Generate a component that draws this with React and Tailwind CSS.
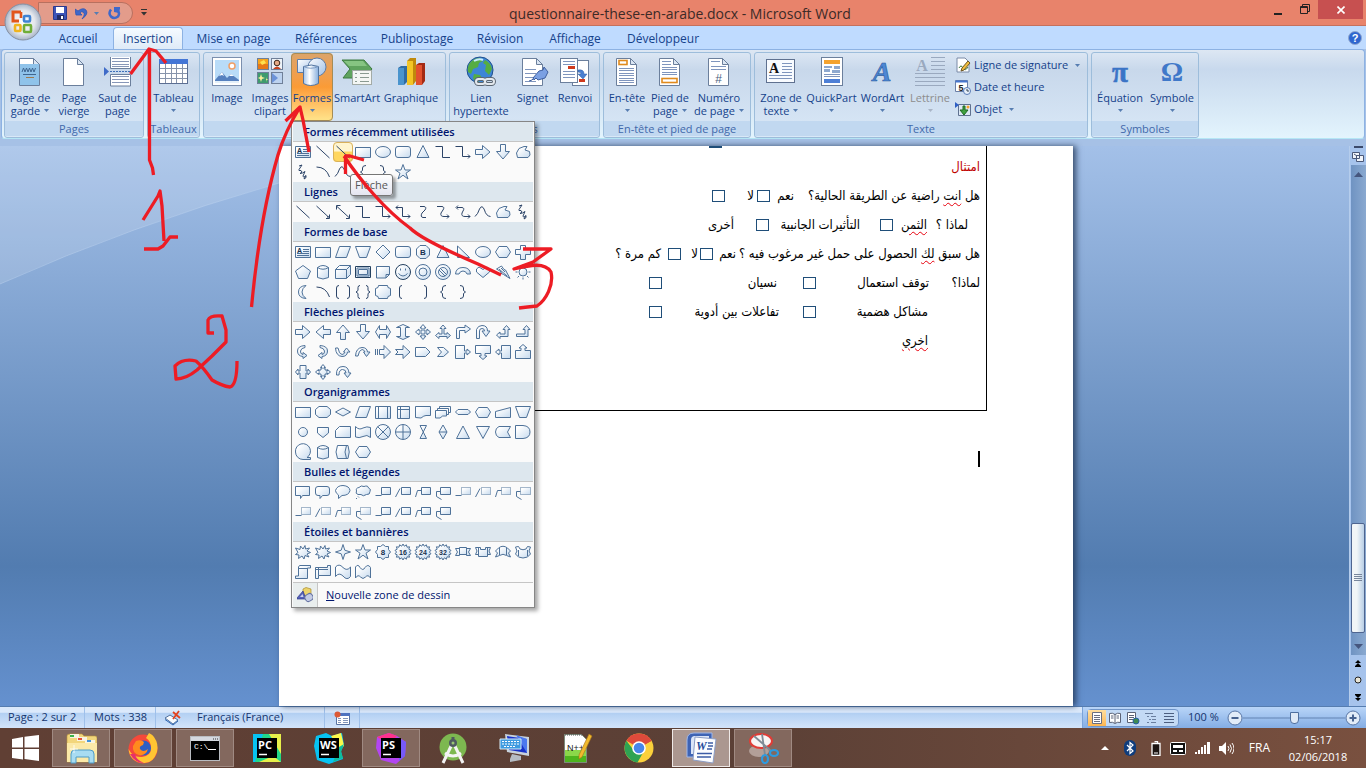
import React from 'react';

const UI = "font-['Open_Sans','Noto_Sans',sans-serif]";

/* Shape gallery: [filled outline, plain line, label] in a 20x20 cell */
const ARROW_R = 'M2.5 7.5H9.5V3.5L17 10L9.5 16.5V12.5H2.5Z';
const CYL = 'M4.5 5.5V15.5Q10 18.5 15.5 15.5V5.5Q10 1.500 4.5 5.5Z';
const STAR = 'M10 2.5L12 8H17.5L13 11.2L15 17L10 13.2L5 17L7 11.2L2.5 8H8Z';
const SEAL = 'M10 2L11.3 4.2L13.4 2.8L14 5.2L16.6 4.8L15.8 7.2L18 8.4L16.4 10L18 11.8L15.8 12.8L16.6 15.2L14 14.8L13.4 17.2L11.3 15.8L10 18L8.7 15.8L6.6 17.2L6 14.8L3.4 15.2L4.2 12.8L2 11.8L3.6 10L2 8.4L4.2 7.2L3.4 4.8L6 5.2L6.6 2.8L8.7 4.2Z';
const CIRCLE = 'M2.5 10A7.5 7.5 0 1 1 17.5 10A7.5 7.5 0 1 1 2.5 10Z';
const S = {
  textbox: ['M2.5 4.5H17.5V15.5H2.5Z', 'M10 7.5H16M10 9.5H16M4 11.5H16M4 13.5H16', 'A'],
  line: ['', 'M3.5 4L16.5 16'],
  arrow: ['', 'M3.5 4L16 15.5M16.5 12.5V16.5H13M15 14V15H14'],
  dbl: ['', 'M4 4.5L16 15.5M16.5 12.5V16.5H13M3.5 7.5V3.5H7.5'],
  rect: ['M2.5 5.5H17.5V15.5H2.5Z', ''],
  ellipse: ['M2.5 10A7.5 5.5 0 0 1 17.5 10A7.5 5.5 0 0 1 2.5 10Z', ''],
  round: ['M5 4.5H15Q17.5 4.5 17.5 7V13Q17.5 15.5 15 15.5H5Q2.5 15.5 2.5 13V7Q2.5 4.5 5 4.5Z', ''],
  tri: ['M10 3.5L16 15.5H4Z', ''],
  elbow: ['', 'M2.5 4.5H9.5V15.5H17'],
  elbowA: ['', 'M2.5 4.5H9.5V14.5H17M15 12.5L17 14.5L15 16.5'],
  elbowD: ['', 'M3 5.5H9.5V14.5H17M15 12.5L17 14.5L15 16.5M5 3.5L3 5.5L5 7.5'],
  right: [ARROW_R, ''],
  left: ['M17.5 7.5H10.5V3.5L3 10L10.5 16.5V12.5H17.5Z', ''],
  up: ['M7.5 17.5V10.5H3.5L10 3L16.5 10.5H12.5V17.5Z', ''],
  down: ['M7.5 2.5V9.5H3.5L10 17L16.5 9.5H12.5V2.5Z', ''],
  free: ['M4.5 15.5L3.5 11L6 6.5L11 4.5H14L12 8L16.5 9.5L17 13L15 15.5Z', ''],
  scrib: ['', 'M6 4L9 3L6 7.5Q5 9 8 8.5L9 10L7 11.5L9.5 11L12 9.5L10 14Q10 16 13 13.5Q14 16 11 17L12.5 14'],
  arc: ['', 'M3.5 5Q13 5 16.5 15'],
  curve: ['', 'M2 14.5Q5 12 6.5 7Q9 2 11.5 8Q13 14 17.5 14.5'],
  lbrace: ['', 'M13 3.5Q9.5 3.5 9.5 6V8.5L7.5 10L9.5 11.5V14Q9.5 16.5 13 16.5'],
  rbrace: ['', 'M7 3.5Q10.5 3.5 10.5 6V8.5L12.5 10L10.5 11.5V14Q10.5 16.5 7 16.5'],
  star: [STAR, ''],
  scurve: ['', 'M7 4.5H11Q14 5 12 8L9 11Q7 15 10 15.5H13'],
  scurveA: ['', 'M4 4.5H9Q12 5 10 8L8 11Q7 14.5 11 14.5H16M14 12.5L16 14.5L14 16.5'],
  scurveD: ['', 'M4 5.5H9Q12 6 10 9L9 11Q8 14.5 12 14.5H17M15 12.5L17 14.5L15 16.5M5 3.5L3 5.5L5 7.5'],
  para: ['M6.5 4.5H17.5L13.5 15.5H2.5Z', ''],
  trap: ['M2.5 4.5H17.5L13.5 15.5H6.5Z', ''],
  diam: ['M10 3L17 10L10 17L3 10Z', ''],
  octo: ['M7 3.5H13L16.5 7V13L13 16.5H7L3.5 13V7Z', '', 'B'],
  rtri: ['M4.5 4L16.5 15.5H4.5Z', ''],
  hex: ['M6 4.5H14L17.5 10L14 15.5H6L2.5 10Z', ''],
  cross: ['M7.5 3.5H12.5V7.5H17.5V12.5H12.5V17.5H7.5V12.5H2.5V7.5H7.5Z', ''],
  penta: ['M10 3.5L17.5 9L14.5 16.5H5.5L2.5 9Z', ''],
  can: [CYL, 'M4.5 5.5Q10 9 15.5 5.5'],
  cube: ['M2.5 7.5L6.5 3.5H17.5V12.5L13.5 16.5H2.5Z', 'M2.5 7.5H13.5V16.5M13.5 7.5L17.5 3.5'],
  bevel: ['M2.5 4.5H17.5V15.5H2.5Z', 'M4 6H16V14H4ZM5.5 7.5H14.5V12.5H5.5Z'],
  fold: ['M3.5 4.5H16.5V12.5L13 16H3.5Z', 'M13 16V12.5H16.5'],
  smile: [CIRCLE, 'M7.5 6.5V8.5M12.5 6.5V8.5M5.5 11.5Q10 16.5 14.5 11.5'],
  donut: [CIRCLE, 'M6 10A4 4 0 1 1 14 10A4 4 0 1 1 6 10Z'],
  no: [CIRCLE, 'M5.5 10A4.5 4.5 0 1 1 14.5 10A4.5 4.5 0 1 1 5.5 10ZM7 6L14 13M6 8L12 14'],
  blockarc: ['M2.5 12Q3 5.5 10 5.5Q17 5.5 17.5 12H14Q13 9 10 9Q7 9 6 12Z', ''],
  heart: ['M10 15.5L3.5 10V7L6 5L10 7.5L14 5L16.5 7V10Z', ''],
  bolt: ['M3.5 7L8.5 4L11 7.5L12.5 8L17 16.5L10.5 12.5L7.5 11L8.5 10Z', 'M6 7L14 14M8 6L12 10'],
  sun: ['M6 10A4 4 0 1 1 14 10A4 4 0 1 1 6 10Z', 'M10 2.5V4.5M10 15.5V17.5M2.5 10H4.5M15.5 10H17.5M4.5 4.5L6 6M14 14L15.5 15.5M15.5 4.5L14 6M6 14L4.5 15.5'],
  moon: ['M13 3.5Q5.5 4 5.5 10Q5.5 16 13 16.5Q9 13.5 9 10Q9 6.5 13 3.5Z', ''],
  brackets: ['', 'M6 3.5Q3.5 3.5 3.5 6V14Q3.5 16.5 6 16.5M14 3.5Q16.5 3.5 16.5 6V14Q16.5 16.5 14 16.5'],
  braces: ['', 'M7 3.5Q5 3.5 5 5.5V8.5L3 10L5 11.5V14.5Q5 16.5 7 16.5M13 3.5Q15 3.5 15 5.5V8.5L17 10L15 11.5V14.5Q15 16.5 13 16.5'],
  plaque: ['M5.500 3.5H14.5L15 5.5L17.5 6.5V13.5L15 14.5L14.5 16.5H5.5L5 14.5L2.5 13.5V6.5L5 5.5Z', ''],
  lbr: ['', 'M9 3.5Q6.5 3.5 6.5 6V14Q6.5 16.5 9 16.5'],
  rbr: ['', 'M11 3.5Q13.5 3.5 13.5 6V14Q13.5 16.5 11 16.5'],
  leftright: ['M2.5 10L6.5 3.5V7.5H13.5V3.5L17.5 10L13.5 16.5V12.5H6.5V16.5Z', ''],
  updown: ['M10 2.5L16.5 5.5H12.5V14.5H16.5L10 17.5L3.5 14.5H7.5V5.5H3.5Z', ''],
  quad: ['M10 2.5L13 6H11V9H14V7L17.5 10L14 13V11H11V14H13L10 17.5L7 14H9V11H6V13L2.5 10L6 7V9H9V6H7Z', ''],
  tri3: ['M10 3L13 6.5H11V12H14V10.5L17.5 13.5L14 16.5V14.5H6V16.5L2.5 13.5L6 10.5V12H9V6.5H7Z', ''],
  bend: ['M3.5 16.5V7.5Q3.5 5.5 6 5.5H12V3L17.5 7L12 11V8.5H6.5V16.5Z', ''],
  uturn: ['M3.5 16.5V7.5Q5 3.5 9 3.5Q14.5 3.5 14.5 9H17L13 14.5L9 9H11.5Q11.5 6.5 9 6.5Q6.5 6.5 6.5 9V16.5Z', ''],
  leftup: ['M13.5 3.5L17 7.5H15V14.5H7V16.5L3.5 13L7 10V12H12V7.5H10Z', ''],
  bendup: ['M13.5 3.5L17 7.5H15V14.5H3.5V12H12V7.5H10Z', ''],
  cright: ['M12 3.5Q4.5 4 4.5 9Q4.5 14 10 14.5V16.5L14 13.5L10 10.5V12.5Q7 12 7.5 9Q8 6 12 5.5Z', ''],
  cleft: ['M7 3.5Q14.5 4 14.5 9Q14.5 14 9 14.5V16.5L5 13.5L9 10.5V12.5Q12 12 11.5 9Q11 6 7 5.5Z', ''],
  cup: ['M2.5 6Q3 14 9 14.5Q14 14.5 14.5 10H17L13.5 6L10.5 10H12Q11 12.5 9 12.5Q6 12 5 6Z', ''],
  cdown: ['M2.5 14Q3 6 9 5.5Q14 5.5 14.5 10H17L13.5 14.5L10.5 10H12Q11 7.5 9 7.5Q6 8 5 14Z', ''],
  stripe: ['M6.5 7.5H11V3.5L17.5 10L11 16.5V12.5H6.5Z', 'M2.5 7V13M4.5 7V13'],
  notch: ['M2.5 7.5H10V3.5L17 10L10 16.5V12.5H2.5L5 10Z', ''],
  pent: ['M2.5 5.5H12.5L17 10L12.5 14.5H2.5Z', ''],
  chev: ['M4.5 5.5H10.5L15.5 10L10.5 14.5H4.5L8.5 10Z', ''],
  callR: ['M2.5 3.5H11.5V9H14V7L17.5 10L14 13V11H11.5V16.5H2.5Z', ''],
  callD: ['M2.5 3.5H17.5V11.5H12V14H14L10 17.5L6 14H8V11.5H2.5Z', ''],
  callL: ['M17.5 3.5H8.5V9H6V7L2.5 10L6 13V11H8.5V16.5H17.5Z', ''],
  callU: ['M2.5 16.5H17.5V8.5H12V6H14L10 2.5L6 6H8V8.5H2.5Z', ''],
  callLR: ['M7 3.5H13V9H15V7L17.5 10L15 13V11H13V16.5H7V11H5V13L2.5 10L5 7V9H7Z', ''],
  callQ: ['M10 2.5L12.5 5.5H11V7H13V9H14.5V7.5L17.5 10L14.5 12.5V11H13V13H11V14.5H12.5L10 17.5L7.5 14.5H9V13H7V11H5.5V12.5L2.5 10L5.5 7.5V9H7V7H9V5.5H7.5Z', ''],
  circ: ['M3.5 13Q3 4.5 10 4.5Q15.5 4.5 16 11H18L14.5 15.5L11 11H13Q13 7.5 9.5 7.5Q6 7.5 6 13Z', ''],
  altp: ['M6 4.5H14L17.5 7.5V12.5L14 15.5H6L2.5 12.5V7.5Z', ''],
  flat: ['M2.5 10L10 6L17.5 10L10 14Z', ''],
  predef: ['M2.5 4.5H17.5V16.5H2.5Z', 'M5.5 4.5V16.5M14.5 4.5V16.5'],
  intern: ['M4.5 4.5H16.5V16.5H4.5Z', 'M7.5 4.5V16.5M4.5 7.5H16.5'],
  doc: ['M2.5 4.5H17.5V13.5H13Q11 13.5 8 16L2.5 15.5Z', ''],
  docs: ['M2.5 8.5H13.5V14Q9 13 7 16H2.5Z', 'M4.5 8V6.5H15.5V12.5H14M6.5 6V4.5H17.5V10.5H16'],
  term: ['M5 7.5H15L17.5 10L15 12.5H5L2.5 10Z', ''],
  prep: ['M5.5 5.5H14.5L17.5 10L14.5 15.5H5.5L2.5 10Z', ''],
  manual: ['M2.5 9.5L17.5 5.5V15.5H2.5Z', ''],
  conn: ['M5.5 10A4.5 4.5 0 1 1 14.5 10A4.5 4.5 0 1 1 5.5 10Z', ''],
  off: ['M4.5 5.5H15.5V11L10 15.5L4.5 11Z', ''],
  card: ['M6.5 4.5H17.5V15.5H2.5V8.5Z', ''],
  tape: ['M2.5 4.5Q6 8.5 10 6Q14 4 17.5 5.5V15.5Q14 12 10 14.5Q6 16.5 2.5 15Z', ''],
  sumj: [CIRCLE, 'M4.5 4.5L15.5 15.5M15.5 4.5L4.5 15.5'],
  orj: [CIRCLE, 'M10 2.5V17.5M2.5 10H17.5'],
  coll: ['M7 3.5H13.5L7 16.5H13.5Z', ''],
  sort: ['M10 3L14 10L10 17L6 10Z', 'M6 10H14'],
  ext: ['M10 4L16.5 16.5H3.5Z', ''],
  merge: ['M3.5 4.5H16.5L10 16.5Z', ''],
  stored: ['M6 4.5H17.5L14.5 10L17.5 15.5H6Q2.5 14 2.5 10Q2.5 6 6 4.5Z', ''],
  delay: ['M2.5 3.5H10Q17 4 17 10Q17 16 10 16.5H2.5Z', ''],
  seq: ['M2.5 10A7.5 7.5 0 1 1 14 15.5H17.5V17.5H10A7.5 7.5 0 0 1 2.5 10Z', ''],
  direct: ['M4.5 3.5H15Q17.5 10 15 16.5H4.5Q1.5 10 4.5 3.5Z', 'M13.5 3.5Q10.5 10 13.5 16.5'],
  bub1: ['M2.5 4.5H16.5V13.5H9.5L7.5 16.5V13.5H2.5Z', ''],
  bub2: ['M5 4.5H14Q16.5 4.5 16.5 7V11Q16.5 13.5 14 13.5H9.5L7 16.5V13.5H5Q2.5 13.5 2.5 11V7Q2.5 4.5 5 4.5Z', ''],
  bub3: ['M5.5 16.5L5.5 13Q2.5 11 2.5 8.5Q4 3.5 10 3.5Q16.5 4 17 8.5Q16 13.5 9 13.5Z', ''],
  cloud: ['M5 12.5Q2 11.5 3.5 9Q2.5 6 6 5.5Q8 3 11 4.5Q15 3 15.5 6Q18.5 7 17 9.5Q17 13 13.5 12.5Q10 15 8 12.5Z', 'M5 14.5L6 15.5M3 16.5H4'],
  fx1: ['M8.5 5.5H17.5V12.5H8.5Z', 'M2.5 13.5H8.5'],
  fx2: ['M8.5 5.5H17.5V12.5H8.5Z', 'M2.5 15L7 6.5'],
  fx3: ['M8.5 5.5H17.5V12.5H8.5Z', 'M2.5 15L4.5 8.5H8.5'],
  fx4: ['M7.5 5.5H17.5V12.5H7.5Z', 'M7.5 9.5H3.5V14.5L8.5 17.5'],
  star5a: ['M10 7L12 3.5L12.5 7L16.5 6L14 9L17.5 10.5L14 12L16 15L12 13.5L11 17L9 14L5.5 16.5L6 13L2.5 12.5L5 10.5L2.5 6L7 7.5L7.5 4Z', ''],
  star4: ['M10 2.5L11.8 8.2L17.5 10L11.8 11.8L10 17.5L8.2 11.8L2.5 10L8.2 8.2Z', ''],
  seal8: ['M10 2.5L12.5 4.5H15.5V7.5L17.5 10L15.5 12.5V15.5H12.5L10 17.5L7.5 15.5H4.5V12.5L2.5 10L4.5 7.5V4.5H7.5Z', '', '8'],
  seal16: [SEAL, '', '16'],
  seal24: [SEAL, '', '24'],
  seal32: [SEAL, '', '32'],
  rib1: ['M2.5 6.5H6.5V5.5H13.5V6.5H17.5L15.5 10L17.5 13.5H13.5V12.5H6.5V13.5H2.5L4.5 10Z', 'M6.5 6V13M13.5 6V13'],
  rib2: ['M2.5 5.5H7.5V7.5H12.5V5.5H17.5L16 9L17.5 12.5H14.5V14.5H5.5V12.5H2.5L4 9Z', 'M5.5 6V13M14.5 6V13'],
  rib3: ['M2.5 15L4.5 11L2.5 9L5.5 6Q10 2.5 14.5 6L17.5 9L15.5 11L17.5 15L13.5 13.5Q10 11 6.5 13.5Z', 'M6.5 6V13M13.5 6V13'],
  rib4: ['M2.5 5L5.5 4.5L7 7Q10 8.5 13 7L14.5 4.5L17.5 5L16 9L17.5 12L14.5 15Q10 17 5.5 15L2.5 12L4 9Z', 'M5.5 8V14M14.5 8V14'],
  scrollV: ['M6.5 3.5H17.5V6H14.5V16.5H2.5V14H5.5V5Z', 'M6 6.5H14.5'],
  scrollH: ['M2.5 5.5L14.5 5.5V3.5H17.5V13.5H5.5V16.5H2.5Z', 'M5.5 6V13.5M2.5 7.5H15'],
  wave: ['M2.5 5Q6 1 10 5.5Q14 9.500 17.5 5V14.5Q14 19 10 14Q6 10 2.5 14.5Z', ''],
  dwave: ['M2.5 5Q5 1.500 7 5.5Q10 9.500 12 5.5Q15 1.500 17.5 5.5V16Q15 12 12.5 15Q10 18 7.5 15Q5 12 2.5 16Z', ''],
};

const SECTIONS = [
  ['Formes récemment utilisées', 'textbox line line rect ellipse round tri elbow elbowA right down free scrib arc curve lbrace rbrace star'],
  ['Lignes', 'line arrow dbl elbow elbowA elbowD scurve scurveA scurveD curve free scrib'],
  ['Formes de base', 'textbox rect para trap diam round octo tri rtri ellipse hex cross penta can cube bevel fold smile donut no blockarc heart bolt sun moon arc brackets braces plaque lbr rbr lbrace rbrace'],
  ['Flèches pleines', 'right left up down leftright updown quad tri3 bend uturn leftup bendup cright cleft cup cdown stripe notch pent chev callR callD callL callU callLR callQ circ'],
  ['Organigrammes', 'rect altp flat para predef intern doc docs term prep manual trap conn off card tape sumj orj coll sort ext merge stored delay seq can direct hex'],
  ['Bulles et légendes', 'bub1 bub2 bub3 cloud fx1 fx2 fx3 fx4 fx1.d fx2.d fx3.d fx4.d fx1.d fx2.d fx3.d fx4.d fx1 fx2 fx3 fx4'],
  ['Étoiles et bannières', 'star5a star5a star4 star seal8 seal16 seal24 seal32 rib1 rib2 rib3 rib4 scrollV scrollH wave dwave'],
];

function Shape({ name }) {
  const [key, dashed] = name.split('.');
  const [fill, line, label] = S[key];
  const lineColor = fill ? '#4f7299' : '#2c4468';
  return (
    <svg viewBox="0 0 20 20" className="size-5" aria-hidden="true">
      {fill && <path d={fill} fill="url(#shapeFill)" stroke={key === 'bevel' || key === 'smile' ? '#23405f' : '#4f7299'} strokeDasharray={dashed ? '1 1' : undefined} />}
      {line && <path d={line} fill="none" stroke={lineColor} />}
      {label && (
        <text x={label === 'A' ? 6.5 : 10} y={label === 'A' ? 10.5 : 12.5} textAnchor="middle" fontSize={label === 'B' || label === '8' ? 8 : 7} fontWeight="700" fontFamily="Liberation Sans, sans-serif" fill="#16304f">{label}</text>
      )}
    </svg>
  );
}

function ShapesMenu() {
  return (
    <div className="absolute left-[291px] top-[121px] w-[244px] border border-[#868686] bg-[#fafafa] px-px shadow-[3px_3px_4px_rgba(0,0,0,0.35)]">
      {SECTIONS.map(([title, list], si) => (
        <section key={title}>
          <h2 className="h-5 border-b border-[#c5c5c5] bg-[#dde7ee] pl-[11px] text-[11px] font-semibold leading-[19px] text-[#00156e]">{title}</h2>
          <div className="grid grid-cols-12">
            {list.split(' ').map((n, i) => (
              <button key={i} aria-label={n} className={si === 0 && i === 2 ? 'h-5 rounded-sm bg-linear-to-b from-[#fff5cf] from-45% to-[#ffd65e] to-50% outline-1 -outline-offset-1 outline-[#d8b05c]' : 'h-5'}>
                <Shape name={n} />
              </button>
            ))}
          </div>
        </section>
      ))}
      <button className="flex h-[25px] w-full items-center border-t border-[#c5c5c5] text-[11px] text-[#00156e]">
        <span className="flex h-full w-[25px] items-center justify-center border-r border-[#c5c5c5] bg-[#e9eeee]">
          <svg viewBox="0 0 16 16" className="size-4"><path d="M6 2l3-1.5L14 2v6l-4 2-4-2z" fill="#ecd36a" stroke="#a98c2c" strokeWidth=".7" /><path d="M0 11L6 4l3 8H0z" fill="#5561b8" stroke="#2f3a8a" strokeWidth=".7" /><path d="M3 10l2.500-3 1 3z" fill="#cdd2ee" /><rect x="8" y="7" width="8" height="7" rx="3" fill="#c3cbe4" stroke="#6572a3" transform="rotate(-35 12 10.500)" /></svg>
        </span>
        <span className="pl-2"><span className="underline">N</span>ouvelle zone de dessin</span>
      </button>
    </div>
  );
}

/* ---------- ribbon icons ---------- */
const Page = ({ children, x = 5, y = 2, w = 21, h = 28 }) => (
  <>
    <path d={`M${x + 0.5} ${y + 0.5}h${w - 7}l6 6v${h - 7}h-${w - 1}z`} fill="#fff" stroke="#6b7f9c" />
    <path d={`M${x + w - 6.5} ${y + 0.5}v6h6z`} fill="#dbe6f3" stroke="#6b7f9c" />
    {children}
  </>
);
const Lines = ({ x1, x2, ys, c = '#7f95bd' }) => <path d={ys.map((y) => `M${x1} ${y + 0.5}H${x2}`).join('')} stroke={c} fill="none" />;

const ICONS = {
  garde: <Page><path d="M6 8h19v21H6z" fill="#8fc3ea" /><path d="M8 16l1.500-4 1.500 4 1.500-4 1.500 4 1.500-4 1.500 4 1.500-4 1.500 4 1.500-4" stroke="#3f6791" fill="none" /><Lines x1={9} x2={22} ys={[18]} c="#3f6791" /><Lines x1={12} x2={20} ys={[21]} c="#a07a4e" /></Page>,
  vierge: <Page />,
  saut: <><path d="M8.500 1v11.500h20V1" fill="#fff" stroke="#6b7f9c" /><path d="M8.500 30V18.500h20V30z" fill="#fff" stroke="#6b7f9c" /><Lines x1={10} x2={27} ys={[2, 5, 8, 10, 20, 23, 26]} c="#8797b8" /><path d="M2 11l5 4.500-5 4.500z" fill="#3f6bc8" /><path d="M8 15.500h22" stroke="#3c6eb9" strokeDasharray="2 1" /></>,
  tableau: <><rect x="1.500" y="3.500" width="28" height="24" fill="#fff" stroke="#5c6f93" /><path d="M1 3h29v5H1z" fill="#4476d6" /><path d="M2 12.500h27M2 17.500h27M2 22.500h27M7.500 8v19M13.500 8v19M18.500 8v19M24.500 8v19" stroke="#8794ab" /></>,
  image: <><rect x="1.500" y="1.500" width="29" height="28" fill="#fff" stroke="#7b8fae" /><rect x="4" y="4" width="24" height="23" fill="#b9dcf8" /><circle cx="21" cy="10" r="3" fill="#fff" stroke="#f0a068" strokeWidth="1.500" /><path d="M4 24l7-8 5 6 4-4 8 6v1H4z" fill="#5681bf" /><path d="M4 25h24v2H4z" fill="#e4f0fa" /><path d="M11 16l-3 4 3-1 2 1zM20 18l-2 2h5z" fill="#fff" /></>,
  clipart: <><rect x="3.500" y="2.500" width="11" height="11" fill="#f7a41d" stroke="#6f7f98" /><path d="M4 8h10v5H4z" fill="#e77817" /><path d="M6 6l4-2 2 3-4 2z" fill="#ffe14f" /><rect x="17.500" y="2.500" width="11" height="11" fill="#eef3f8" stroke="#6f7f98" /><circle cx="23" cy="7" r="2.800" fill="#e4a985" stroke="#3b2518" /><path d="M19 13q4-5 8 0z" fill="#c6421f" /><rect x="3.500" y="16.500" width="11" height="11" fill="#3f9b6e" stroke="#6f7f98" /><path d="M7 18l1 3 3 1-3 1-1 3-1-3-2-1 2-1zM12 21l.500 2 2 .500-2 .500-.500 2z" fill="#f7ee9a" /><rect x="17.500" y="16.500" width="11" height="11" fill="#bcd2ef" stroke="#6f7f98" /><path d="M18 17l6 5-6 5z" fill="#6d93d8" /></>,
  formes: <><path d="M1.500 3.500h17v13h-17z" fill="url(#blue3)" stroke="#5e7da8" /><circle cx="21" cy="11" r="9" fill="url(#blue3)" stroke="#5e7da8" /><path d="M7.500 10.500v17q7 4 15 0v-17q-7-3-15 0z" fill="url(#cylFill)" stroke="#53749f" /><path d="M7.500 10.500q7 3.500 15 0" fill="none" stroke="#7d9cc5" /></>,
  smartart: <><path d="M1 4h22l8 9-8 9H2l7-9z" fill="#5fa35e" stroke="#3d7a41" /><path d="M3 5h19l4 5H8z" fill="#86c482" /><rect x="11.500" y="14.500" width="19" height="14" fill="#f4f6f4" stroke="#a3aba6" /><Lines x1={19} x2={28} ys={[17, 21, 25]} c="#8a9a92" /><path d="M14 17.500h2M14 21.500h2M14 25.500h2" stroke="#8a9a92" /></>,
  graphique: <><path d="M3 12l3-2h6v16l-3 3H3z" fill="#2f6ba3" /><path d="M3 12h6v17H3z" fill="#4a94cd" /><path d="M12 5l3-3h6v23l-3 4h-6z" fill="#c08a0c" /><path d="M12 5h6v24h-6z" fill="#f3c526" /><path d="M21 9l3-2h6v18l-3 4h-6z" fill="#a32a14" /><path d="M21 9h6v20h-6z" fill="#e2512f" /></>,
  lien: <><circle cx="15" cy="14" r="13" fill="#3d86d6" stroke="#20508c" /><path d="M4 8q4-6 11-6l3 3-4 2-1 4-5 2-2 5-3-2q-1-4 1-8zM20 4q6 3 7 9l-3 6-4-4 1-6-3-2zM9 18l6 1 2 3-4 4q-4-1-5-4z" fill="#55ad43" /><path d="M9 5q5-3 9-1" stroke="#c9ecff" fill="none" strokeWidth="2" /><g fill="none" strokeWidth="4" stroke="#5c6773"><rect x="11" y="23" width="9" height="5" rx="2.500" /><rect x="20" y="23" width="9" height="5" rx="2.500" /></g><g fill="none" strokeWidth="2" stroke="#e3e8ed"><rect x="11" y="23" width="9" height="5" rx="2.500" /><rect x="20" y="23" width="9" height="5" rx="2.500" /></g></>,
  signet: <Page><Lines x1={8} x2={19} ys={[13, 17, 21, 25]} /><path d="M12 25q3 0 6-4" fill="none" stroke="#3f5f9f" /><path d="M16 22l6-7 4-1 1-3 4 5-3 6-7 2-2-2-2 2z" fill="#7ba0e3" stroke="#3f5f9f" /></Page>,
  renvoi: <><rect x="13.500" y="4.500" width="16" height="25" fill="#fff" stroke="#6b7f9c" /><rect x="1.500" y="2.500" width="17" height="24" fill="#fff" stroke="#6b7f9c" /><Lines x1={4} x2={16} ys={[5, 8, 15, 18, 21]} /><path d="M9 10h7v3H9zM20 23h6v3h-6z" fill="#cf3a1c" /><path d="M19 14q6-1 6 4h3l-4 5-5-5h3q0-2-3-2z" fill="#4a7fd0" stroke="#2f5ca6" strokeWidth=".5" /></>,
  entete: <Page><rect x="8" y="4.500" width="8" height="4" fill="#fff" stroke="#e08a1d" strokeWidth="1.600" /><Lines x1={8} x2={23} ys={[12, 14, 17, 19, 22, 24, 26]} /></Page>,
  pied: <Page><Lines x1={8} x2={17} ys={[5, 8]} /><Lines x1={8} x2={23} ys={[11, 13, 16, 18]} /><rect x="8" y="22.500" width="15" height="4" fill="#fff" stroke="#e08a1d" strokeWidth="1.600" /></Page>,
  numero: <Page><Lines x1={8} x2={17} ys={[5]} /><Lines x1={8} x2={23} ys={[10, 13]} /><text x="15.500" y="27" fontSize="12" textAnchor="middle" fill="#4a5f80" fontFamily="Liberation Sans">#</text></Page>,
  zone: <><rect x="1.500" y="3.500" width="28" height="23" fill="#f8fbff" stroke="#5f7190" /><text x="9" y="17" fontSize="14" fontWeight="700" textAnchor="middle" fill="#111" fontFamily="Liberation Serif">A</text><Lines x1={17} x2={27} ys={[7, 10, 13, 16]} /><Lines x1={4} x2={27} ys={[19, 22]} /></>,
  quick: <><rect x="5.500" y="1.500" width="21" height="28" fill="#fff" stroke="#6b7f9c" /><path d="M8 4h16v4H8z" fill="#f5a32f" /><path d="M8 10h8v2H8zM18 10h6v3h-6zM8 13h6v3H8zM16 14h8v3h-8z" fill="#8fa9cf" /><Lines x1={8} x2={24} ys={[18, 20]} /><path d="M8 23h16v4H8z" fill="#4d7fd6" /></>,
  wordart: <text x="15" y="25" fontSize="28" fontWeight="700" fontStyle="italic" textAnchor="middle" fill="#4d87d4" stroke="#2b5ca0" strokeWidth=".6" fontFamily="Liberation Serif">A</text>,
  lettrine: <><text x="8" y="15" fontSize="16" fontWeight="700" textAnchor="middle" fill="#9aa9bf" fontFamily="Liberation Serif">A</text><Lines x1={17} x2={31} ys={[1, 5, 9, 13]} c="#9aa9bf" /><Lines x1={1} x2={31} ys={[17, 21, 25, 29]} c="#9aa9bf" /></>,
  equation: <text x="16" y="26" fontSize="29" fontWeight="700" textAnchor="middle" fill="#3a74c6" stroke="#3a74c6" strokeWidth=".6" fontFamily="Liberation Serif">π</text>,
  symbole: <text x="16" y="25" fontSize="28" fontWeight="700" textAnchor="middle" fill="#3f78c9" fontFamily="Liberation Serif">Ω</text>,
};

const Caret = ({ dim }) => <svg viewBox="0 0 5 3" className="inline-block h-[3px] w-[5px]" aria-hidden="true"><path d="M0 0h5L2.500 3z" fill={dim ? '#a9b5c6' : '#567db1'} /></svg>;

function Big({ icon, a, b, caret, w, on, dim }) {
  return (
    <button className={`${w} flex shrink-0 flex-col items-center pt-[3px] text-[11px] leading-[13px] whitespace-nowrap ${on ? 'rounded-sm bg-linear-to-b from-[#dca46a] from-0% via-[#fb9b35] via-50% to-[#ffe58c] outline-1 -outline-offset-1 outline-[#a58c56]' : ''} ${dim ? 'text-[#8d8d8d]' : 'text-[#15428b]'}`}>
      <svg viewBox="0 0 32 32" className="mb-[3px] size-8">{ICONS[icon]}</svg>
      <span>{a}</span>
      <span className="flex h-[13px] items-center gap-1">{b}{caret && <Caret dim={dim} />}</span>
    </button>
  );
}

function Group({ title, w, children }) {
  return (
    <section className={`${w} flex shrink-0 flex-col overflow-hidden rounded-[3px] border border-[#9dbddb] bg-linear-to-b from-[#dbe6f3] from-0% via-[#c8d8eb] via-20% to-[#d9e8f7]`}>
      <div className="flex h-[68px] px-px">{children}</div>
      <h2 className="h-[15px] bg-[#c1d8f0] text-center text-[11px] leading-[15px] text-[#4169ab]">{title}</h2>
    </section>
  );
}

function Small({ icon, label, caret }) {
  return (
    <button className="flex h-[22px] items-center gap-[3px] text-[11px] text-[#15428b] whitespace-nowrap">
      <svg viewBox="0 0 16 16" className="size-4">{icon}</svg>
      {label}
      {caret && <span className="flex pl-1"><Caret /></span>}
    </button>
  );
}

/* ---------- document ---------- */
function Box({ w, label }) {
  return (
    <span className={`${w} flex shrink-0 items-center`}>
      <input type="checkbox" aria-label={label} className="h-3 w-[13px] appearance-none border border-[#1f4e79] bg-white" />
    </span>
  );
}
const T = ({ w, children }) => <span className={`${w} shrink-0 whitespace-nowrap`}>{children}</span>;
const Err = ({ children }) => <span className="underline decoration-red-600 decoration-wavy decoration-1 underline-offset-2">{children}</span>;
const Row = ({ children }) => <div className="flex h-[29px] items-center">{children}</div>;

function Document() {
  return (
    <article lang="ar" dir="rtl" className="ml-[279px] h-full w-[794px] shrink-0 bg-white shadow-[3px_0_6px_rgba(30,50,80,0.8)]">
      <div className="mr-[86px] h-[265px] w-[600px] border-r border-b border-black pr-[6px] text-[13px] leading-[20px] text-black font-['DejaVu_Sans_Condensed','DejaVu_Sans',serif]">
        <div className="h-[6px] pr-[258px]"><div className="h-[2px] w-[13px] bg-[#1f4e79]" /></div>
        <div className="flex h-[29px] items-center text-[#c00000]">امتثال</div>
        <Row><T w="w-[186px]">هل <Err>انت</Err> راضية عن الطريقة الحالية؟</T><T w="w-[24px]">نعم</T><Box w="w-[16px]" label="نعم" /><T w="w-[29px]">لا</T><Box w="w-[16px]" label="لا" /></Row>
        <Row><T w="w-[53px] pr-3">لماذا ؟</T><T w="w-[34px]"><Err>الثمن</Err></T><Box w="w-[33px]" label="الثمن" /><T w="w-[91px]">التأثيرات الجانبية</T><Box w="w-[35px]" label="التأثيرات الجانبية" /><T w="w-[30px]">أخرى</T></Row>
        <Row><T w="w-[244px]">هل سبق <Err>لك</Err> الحصول على حمل غير مرغوب فيه ؟</T><T w="w-[23px]">نعم</T><Box w="w-[15px]" label="نعم" /><T w="w-[17px]">لا</T><Box w="w-[20px]" label="لا" /><T w="w-[42px]">كم مرة ؟</T></Row>
        <Row><T w="w-[51px]">لماذا؟</T><T w="w-[113px]">توقف استعمال</T><Box w="w-[39px]" label="توقف استعمال" /><T w="w-[115px]">نسيان</T><Box w="w-[16px]" label="نسيان" /></Row>
        <Row><T w="w-[164px] pr-[52px]">مشاكل هضمية</T><Box w="w-[37px]" label="مشاكل هضمية" /><T w="w-[117px]">تفاعلات بين أدوية</T><Box w="w-[16px]" label="تفاعلات بين أدوية" /></Row>
        <Row><T w="w-[82px] pr-[52px]"><Err>اخري</Err></T></Row>
      </div>
      <div className="mt-[40px] mr-[93px] h-4 w-[2px] bg-black" />
    </article>
  );
}

function Scrollbar() {
  return (
    <div className="flex w-[17px] shrink-0 flex-col items-center border-l border-[#b5cdec] bg-[#a6c3ec]">
      <span className="h-[2px] w-[9px] bg-[#3b4a6b]" />
      <button aria-label="Règle" className="h-[17px]"><svg viewBox="0 0 12 12" className="size-3"><path d="M.5 1.500h7v6h-7zM4.500 4.500h7v6h-7z" fill="#f1f4fa" stroke="#4a5878" /><path d="M2 3l3 2" stroke="#4a5878" /></svg></button>
      <div className="flex w-[15px] flex-1 flex-col items-center bg-linear-to-r from-[#6f93c2] to-[#8aa9d0]">
        <button aria-label="Haut" className="flex h-[19px] items-center"><svg viewBox="0 0 9 5" className="h-[5px] w-[9px]"><path d="M0 5h9L4.500 0z" fill="#45567e" /></svg></button>
        <div className="flex-1" />
        <div className="flex h-[110px] w-[14px] items-center justify-center rounded-[2px] border border-[#4f6590] bg-linear-to-r from-[#f1f5f7] from-40% to-[#b9cfe6]">
          <svg viewBox="0 0 8 8" className="size-2"><path d="M0 .5h8M0 2.500h8M0 4.500h8M0 6.500h8" stroke="#78869c" /></svg>
        </div>
        <button aria-label="Bas" className="flex h-[22px] items-center pt-1"><svg viewBox="0 0 9 5" className="h-[5px] w-[9px]"><path d="M0 0h9L4.500 5z" fill="#45567e" /></svg></button>
      </div>
      <div className="flex h-[51px] flex-col items-center justify-around">
        <button aria-label="Page précédente"><svg viewBox="0 0 6 7" className="block h-[7px] w-[6px]"><path d="M0 3L3 0l3 3zM0 6L3 3l3 3zM0 6h6v1H0z" fill="#000" /></svg></button>
        <button aria-label="Sélectionner"><svg viewBox="0 0 8 8" className="block size-2"><circle cx="4" cy="4" r="3" fill="#e9e5d6" stroke="#222" /></svg></button>
        <button aria-label="Page suivante"><svg viewBox="0 0 6 7" className="block h-[7px] w-[6px]"><path d="M0 4l3 3 3-3zM0 1l3 3 3-3zM0 0h6v1H0z" fill="#000" /></svg></button>
      </div>
    </div>
  );
}

/* ---------- status bar ---------- */
const VIEWS = ['Page', 'Lecture', 'Web', 'Plan', 'Brouillon'];
const VIEW_ICONS = [
  <path d="M3.500 1.500h9v11h-9zM5 4.500h6M5 6.500h6M5 8.500h6M5 10.500h6" fill="#fff" stroke="#6a6f80" />,
  <path d="M2.500 2.500q3-1 5.500 1 2.500-2 5.500-1v9q-3-1-5.500 1-2.500-2-5.500-1zM8 3v9M4 5h2.500M4 7h2.500M9.500 5H12M9.500 7H12" fill="#fff" stroke="#5a6276" />,
  <><path d="M2.500 1.500h8v10h-8zM4 4.500h5M4 6.500h5M4 8.500h5" fill="#fff" stroke="#5a6276" /><circle cx="11" cy="10" r="3" fill="#3d8a52" stroke="#2760a8" /></>,
  <path d="M2 2.500h8M4 5.500h2M8 5.500h5M6 8.500h2M9 8.500h4M4 11.500h2M8 11.500h5" fill="none" stroke="#6a7f9f" />,
  <path d="M3 2.500h10M3 5.500h10M3 8.500h10M3 11.500h10" fill="none" stroke="#4c5f80" />,
];

function StatusBar() {
  const cell = 'flex items-center border-r border-[#9fc0ea]';
  return (
    <footer className="flex h-[22px] shrink-0 border-t border-[#567db0] bg-linear-to-b from-[#dbe9fb] from-25% via-[#b3d0f3] via-30% to-[#d3e4fa] text-[11px] text-[#15356e] whitespace-nowrap">
      <span className={`${cell} w-[85px] pl-2`}>Page : 2 sur 2</span>
      <span className={`${cell} w-[71px] pl-[9px]`}>Mots : 338</span>
      <span className={`${cell} w-[169px] gap-4 pl-2`}>
        <svg viewBox="0 0 17 16" className="h-4 w-[17px]"><path d="M1 8l5-3 8 5-5 4z" fill="#f7fafd" stroke="#50719f" /><path d="M1 9.500l8 5.500 5-4" stroke="#2f66b3" fill="none" /><path d="M9 2l7 6M15 1l-6 8" stroke="#e2431e" strokeWidth="1.800" /></svg>
        Français (France)
      </span>
      <span className={`${cell} w-[35px] justify-center`}>
        <svg viewBox="0 0 16 14" className="h-[14px] w-4"><path d="M2.500 2.500h13v11h-13z" fill="#fff" stroke="#5872a2" /><path d="M2 2h14v3H2z" fill="#4e73c0" /><path d="M4 7.500h3M9 7.500h5M4 9.500h3M9 9.500h5M4 11.500h3M9 11.500h5" stroke="#8194ba" /><circle cx="3.500" cy="3.500" r="3" fill="#dd5a35" /></svg>
      </span>
      <span className="flex-1" />
      <div className="flex items-center border-l border-[#7ba3d8] bg-linear-to-b from-[#b9d5f8] to-[#84ade4] pl-[4px]">
        <div className="flex h-[18px] rounded-sm border border-[#6f94c8] bg-[#c3daf5]">
          {VIEWS.map((v, i) => (
            <button key={v} aria-label={v} className={i === 0 ? 'w-[18px] bg-linear-to-b from-[#ffdf9f] to-[#fdb64f]' : 'w-[18px]'}>
              <svg viewBox="0 0 16 14" className="mx-auto h-[14px] w-4">{VIEW_ICONS[i]}</svg>
            </button>
          ))}
        </div>
        <span className="w-[47px] pl-[9px]">100 %</span>
        <button aria-label="Zoom arrière" className="ml-px"><svg viewBox="0 0 16 16" className="size-4"><circle cx="8" cy="8" r="7" fill="#e2ecf8" stroke="#5876a6" /><path d="M4.500 8h7" stroke="#47628f" strokeWidth="2" /></svg></button>
        <input type="range" aria-label="Zoom" defaultValue="50" className="h-4 w-[102px] appearance-none bg-linear-to-b from-transparent from-45% via-[#4f6f9f] via-50% to-transparent to-55% [&::-webkit-slider-thumb]:h-3 [&::-webkit-slider-thumb]:w-[9px] [&::-webkit-slider-thumb]:appearance-none [&::-webkit-slider-thumb]:rounded-b-[4px] [&::-webkit-slider-thumb]:border [&::-webkit-slider-thumb]:border-[#4f6f9f] [&::-webkit-slider-thumb]:bg-[#dfe9f6]" />
        <button aria-label="Zoom avant" className="mr-[5px]"><svg viewBox="0 0 16 16" className="size-4"><circle cx="8" cy="8" r="7" fill="#e2ecf8" stroke="#5876a6" /><path d="M4.500 8h7M8 4.500v7" stroke="#47628f" strokeWidth="2" /></svg></button>
      </div>
    </footer>
  );
}

/* ---------- taskbar ---------- */
const Badge = ({ t }) => (
  <><rect x="6" y="6" width="20" height="20" fill="#000" /><text x="7" y="17" fontSize="11" fontWeight="700" fill="#fff" fontFamily="Open Sans, sans-serif">{t}</text><path d="M8 22.500h8" stroke="#fff" strokeWidth="1.500" /></>
);
const APPS = [
  ['Explorateur', 1, <><path d="M2 4q0-2 3-2h12l2 2h11q2 0 2 2v24H2z" fill="#f2d67c" stroke="#b8953a" strokeWidth=".6" /><path d="M5 2h9v4H5z" fill="#f8f4e2" /><path d="M5 3h4v2H5z" fill="#3bb54a" /><path d="M12 5h10v4H12z" fill="#f8f4e2" /><path d="M13 6h4v2h-4z" fill="#e34e36" /><path d="M20 8h10v3H20z" fill="#f8f4e2" /><path d="M22 8h4v2h-4z" fill="#4393d8" /><path d="M2 11h30v19H2z" fill="#fbe9a8" /><path d="M6 31V22q0-4 4-4h15q4 0 4 4v9h-5v-6H11v6z" fill="#a8dcf2" stroke="#4e9cc7" /><path d="M9 13v8M5 17h8" stroke="#fff" strokeWidth=".8" /></>],
  ['Firefox', 1, <><circle cx="16" cy="17" r="14.500" fill="#f5493a" /><path d="M27 5q5 7 3 15-4 12-14 11Q3 30 1.500 17 6 26 15 25q9-1 9-9 0-7-5-10l3-5q4 2 5 4z" fill="#ffc533" /><path d="M3 22Q8 31 17 31q-8-3-9-9z" fill="#e6306c" /><circle cx="16.500" cy="16" r="7.500" fill="#2b5fc4" /><path d="M9 9q5-2 8 1l-1 3q-4 1-3 4 3 4 8 0-2 7-9 6-7-2-6-9z" fill="#ff8a1e" /></>],
  ['Invite de commandes', 1, <><rect x="1.500" y="4.500" width="29" height="24" fill="#000" stroke="#b9bcc1" /><path d="M2 5h28v4H2z" fill="#d4d8df" /><path d="M24 7h1M26 7h1M28 7h1" stroke="#333" /><text x="5" y="17" fontSize="8" fill="#fff" fontFamily="Liberation Mono, monospace">C:\</text><path d="M19 17.500h8" stroke="#fff" /></>],
  ['PyCharm', 0, <><path d="M2 2h28v28H2z" fill="#21d789" /><path d="M2 2h10L4 30H2z" fill="#07c3f2" /><path d="M30 2v20L18 2zM8 30l14-6 8 6z" fill="#e8f04a" /><Badge t="PC" /></>],
  ['WebStorm', 0, <><path d="M3 4l10-3 6 3 10-3 2 12-3 6 2 8-14 5L4 28 1 14z" fill="#07c3f2" /><path d="M18 4l10-3 3 13-5 3z" fill="#fcf84a" /><path d="M20 30l10-4-2-6 3-8-5 3z" fill="#0fbd9c" /><Badge t="WS" /></>],
  ['PhpStorm', 1, <><path d="M2 5l12-4 8 3 9 6-1 14-9 8L6 28 1 16z" fill="#b345f1" /><path d="M2 5l12-4 8 3-8 8z" fill="#ff318c" /><path d="M24 6l7 4-1 14-6 5z" fill="#765af8" /><Badge t="PS" /></>],
  ['Android Studio', 0, <><circle cx="16" cy="15" r="13.500" fill="#7db850" /><path d="M16 10L6 31M16 10l10 21M8 21q8 6 16 0" stroke="#f4f4f4" strokeWidth="3" fill="none" /><circle cx="16" cy="11" r="4" fill="#4f5a60" /><circle cx="16" cy="11" r="1.500" fill="#9ac675" /><path d="M16 5v3" stroke="#4f5a60" strokeWidth="3" /></>],
  ['Clavier visuel', 0, <><path d="M6 2l24 3v19L8 20z" fill="#c8d2dc" /><path d="M8 4l20 3v14L10 18z" fill="#1732c9" /><path d="M17 3l11 4v14z" fill="#4c78ee" /><path d="M13 22l9 2v4l-11 2v-3z" fill="#b5bcc4" /><path d="M1 7h21v10H1z" fill="#3f9be0" stroke="#d8ecf9" /><path d="M3 9.500h17M3 12h17M5 14.500h12" stroke="#fff" strokeDasharray="2 1" /></>],
  ['Notepad++', 0, <><path d="M3.500 2.500h17l5 5v23h-22z" fill="#fff" stroke="#7c8a7a" /><path d="M4 18h21v12H4z" fill="#8bd84a" /><path d="M4 24h21v6H4z" fill="#4db51e" /><path d="M4 3h17" stroke="#555" strokeDasharray="1 1" /><text x="6" y="19" fontSize="9" fill="#222" fontFamily="Liberation Sans">N++</text><path d="M28 2l3 2-10 21-3 2v-4z" fill="#f1b92e" stroke="#a5701a" strokeWidth=".6" /></>],
  ['Chrome', 0, <><circle cx="16" cy="16" r="14.500" fill="#fbd03b" /><path d="M16 16L3.400 8.800A14.500 14.500 0 0 1 28.600 8.800z" fill="#de4a3b" /><path d="M28.600 8.800H16v7z" fill="#de4a3b" /><path d="M3.400 8.800A14.500 14.500 0 0 0 14.500 30.400L21 19l-9 1z" fill="#2ea353" /><circle cx="16" cy="16" r="6.800" fill="#fff" /><circle cx="16" cy="16" r="5.300" fill="#4786ea" /></>],
  ['Word', 2, <><path d="M2 8q0-7 7-7h18v24H2z" fill="#3e63b4" stroke="#9eb7ea" /><path d="M6 8q0-4 4-4h14v18H6z" fill="#dbe5f8" /><path d="M10 5l21 2-3 24-20-3z" fill="#fbfcff" stroke="#8c9dc5" /><text x="11" y="18" fontSize="12" fontWeight="700" fontStyle="italic" fill="#254b9c" fontFamily="Liberation Serif">W</text><path d="M23 11h5M23 14h5M22 17h5M12 21.500h15M12 25h14" stroke="#3c5ca6" strokeWidth="1.600" /></>],
  ['Outil Capture', 1, <><ellipse cx="12" cy="19" rx="10" ry="6" fill="#c8b6b0" opacity=".7" /><ellipse cx="14" cy="9" rx="11" ry="7" fill="#f8f4f4" stroke="#e03c36" strokeWidth="2" /><path d="M7 4l17 15M15 2l3 21" stroke="#7f8b96" strokeWidth="1.800" /><g fill="none" stroke="#2c9be0" strokeWidth="2.200"><ellipse cx="27" cy="21" rx="4" ry="3" /><ellipse cx="18" cy="27" rx="3" ry="4" /></g></>],
];

function Taskbar() {
  return (
    <nav className="flex h-10 shrink-0 items-center bg-linear-to-r from-[#603f34] via-[#5b4036] via-55% to-[#79503f] text-white">
      <button aria-label="Démarrer" className="w-[52px] pl-3"><svg viewBox="0 0 27 26" className="h-[26px] w-[27px]"><path d="M0 4l11-2v10.500H0zM12.500 1.800L27 0v12.500H12.500zM0 14h11v10.500L0 23zM12.500 14H27v12l-14.500-2z" fill="#fff" /></svg></button>
      <div className="flex gap-1">
        {APPS.map(([n, st, icon]) => (
          <button key={n} aria-label={n} className={`flex h-[38px] w-[58px] items-center justify-center border ${st === 2 ? 'border-[#efe9e7] bg-[#ab9790]' : st === 1 ? 'border-[#a08a82] bg-[#83685e]' : 'border-transparent'}`}>
            <svg viewBox="0 0 32 32" className="size-8">{icon}</svg>
          </button>
        ))}
      </div>
      <div className="flex-1" />
      <div className="flex items-center">
        <svg viewBox="0 0 8 4" className="mr-[15px] h-1 w-2"><path d="M0 4h8L4 0z" fill="#fff" /></svg>
        <svg viewBox="0 0 12 16" className="mr-[15px] h-4 w-3"><rect width="12" height="16" rx="6" fill="#0f3d7d" /><path d="M3 5l6 6-3 2.500v-11L9 5l-6 6" stroke="#fff" fill="none" strokeWidth="1.200" /></svg>
        <svg viewBox="0 0 10 15" className="mr-[9px] h-[15px] w-[10px]"><path d="M1 2.500h8v12H1zM3.500.5h3v2" fill="#1d1512" stroke="#fff" strokeWidth="1.300" /><path d="M3 12h4" stroke="#fff" /></svg>
        <svg viewBox="0 0 16 13" className="mr-[9px] h-[13px] w-4"><rect x=".5" y=".5" width="15" height="12" rx="1" fill="#111" stroke="#fff" /><path d="M3 3h10v3H3zM3 8h4v2H3zM9 8h4v2H9z" fill="#fff" /></svg>
        <svg viewBox="0 0 15 12" className="mr-[9px] h-3 w-[15px]"><path d="M0 10h2v2H0zM3 8h2v4H3zM6 5h2v7H6zM9 3h2v9H9zM12 0h3v12h-3z" fill="#fff" /></svg>
        <svg viewBox="0 0 15 13" className="mr-[15px] h-[13px] w-[15px]"><path d="M0 4h3l4-4v13L3 9H0z" fill="#fff" /><path d="M9 4q2 2.500 0 5M11 2.500q3 4 0 8M13 1q4 5.500 0 11" stroke="#fff" fill="none" /></svg>
        <span className="text-[12px]">FRA</span>
        <div className="mx-[18px] w-[60px] text-center text-[11px] leading-[17px] whitespace-nowrap">15:17<br />02/06/2018</div>
      </div>
    </nav>
  );
}

const TABS = [
  ['Accueil', 'w-[70px]'], ['Insertion', 'w-[70px]'], ['Mise en page', 'w-[101px]'], ['Références', 'w-[84px]'],
  ['Publipostage', 'w-[98px]'], ['Révision', 'w-[68px]'], ['Affichage', 'w-[82px]'], ['Développeur', 'w-[94px]'],
];

export default function App() {
  return (
    <div className={`${UI} relative flex h-screen w-full flex-col overflow-hidden bg-[#a6c1e6] select-none`}>
      <svg className="absolute size-0" aria-hidden="true">
        <defs>
          <linearGradient id="shapeFill" x1="0" y1="0" x2="1" y2="1"><stop offset=".2" stopColor="#fff" /><stop offset="1" stopColor="#c6daee" /></linearGradient>
          <linearGradient id="blue3" x1="0" y1="0" x2="1" y2="1"><stop offset="0" stopColor="#fff" /><stop offset="1" stopColor="#9dbfe8" /></linearGradient>
          <linearGradient id="cylFill"><stop offset="0" stopColor="#a4c4ea" /><stop offset=".4" stopColor="#fff" /><stop offset="1" stopColor="#86aede" /></linearGradient>
          <radialGradient id="orb"><stop offset="0" stopColor="#fff" /><stop offset=".65" stopColor="#e3e6ec" /><stop offset="1" stopColor="#a9b5c8" /></radialGradient>
        </defs>
      </svg>

      <header className="flex h-[26px] shrink-0 border-b border-[#c5705c] bg-[#e8836b]">
        <div className="ml-[38px] mt-[2px] flex h-[22px] w-[95px] items-center rounded-r-full border border-[#b8705f] bg-[#e39c8b] pl-[14px]">
          <button aria-label="Enregistrer"><svg viewBox="0 0 14 14" className="block size-[14px]"><path d="M.5.5h13v13H.5z" fill="#3d54b8" stroke="#2a3a8e" /><path d="M3 1h8v6H3z" fill="#fff" /><path d="M4 9h7v5H4z" fill="#222c66" /><path d="M8 10h2v3H8z" fill="#fff" /></svg></button>
          <button aria-label="Annuler" className="ml-2"><svg viewBox="0 0 13 13" className="block size-[13px]"><path d="M0 2l3 2q5-4 8-1 3 4-4 9 4-5 1-7-2-1-3 1l2 2H1z" fill="#3f68c9" stroke="#2f55b5" strokeWidth=".8" /></svg></button>
          <span className="ml-[6px] flex"><Caret /></span>
          <button aria-label="Rétablir" className="ml-[9px]"><svg viewBox="0 0 13 13" className="block size-[13px]"><path d="M3 2.500q-3 4 0 7t7 0q2-3 0-5.500" fill="none" stroke="#3f68c9" strokeWidth="2.500" /><path d="M6 0h6v1.500L11 6 6 5z" fill="#3f68c9" /></svg></button>
        </div>
        <button aria-label="Personnaliser" className="ml-2"><svg viewBox="0 0 6 7" className="block h-[7px] w-[6px]"><path d="M0 .5h6" stroke="#333" /><path d="M0 3h6L3 6.500z" fill="#333" /></svg></button>
        <h1 className="flex-1 pl-[362px] text-[14px] leading-[27px] text-[#3c2a27] whitespace-nowrap">questionnaire-these-en-arabe.docx - Microsoft Word</h1>
        <button aria-label="Réduire" className="w-[26px]"><svg viewBox="0 0 8 10" className="mx-auto block h-[10px] w-2"><path d="M0 5h8v2H0z" fill="#222" /></svg></button>
        <button aria-label="Restaurer" className="w-[27px]"><svg viewBox="0 0 10 10" className="mx-auto -mt-2 block size-[10px]"><path d="M.5 2.500h7v7h-7zM2.500 2V.5h7v7H8M0 3.500h8" fill="none" stroke="#222" /></svg></button>
        <button aria-label="Fermer" className="mr-[3px] h-[19px] w-[45px] bg-[#c75050]"><svg viewBox="0 0 8 8" className="mx-auto block size-2"><path d="M.5.500l7 7M7.500.500l-7 7" stroke="#fff" strokeWidth="1.600" /></svg></button>
      </header>

      <div role="tablist" className="flex h-[23px] shrink-0 bg-[#bfdbff] pt-px pl-[43px]">
        {TABS.map(([t, w]) => (
          <button key={t} role="tab" className={`${w} pt-px text-[12px] text-[#15428b] whitespace-nowrap ${t === 'Insertion' ? 'rounded-t-[4px] border border-b-0 border-[#8db2e3] bg-linear-to-b from-[#f5faff] to-[#dfebf8]' : ''}`}>{t}</button>
        ))}
        <button aria-label="Aide" className="mr-[4px] ml-auto"><svg viewBox="0 0 14 14" className="block size-[14px]"><circle cx="7" cy="7" r="6.500" fill="#2f66cf" stroke="#8fa6cf" /><text x="7" y="11" fontSize="11" fontWeight="700" textAnchor="middle" fill="#fff" fontFamily="Liberation Sans">?</text></svg></button>
      </div>

      <div className="mx-px flex h-[90px] shrink-0 gap-[3px] rounded-[4px] border border-[#8db2e3] border-b-[#b5e6f5] bg-linear-to-b from-[#dde7f3] from-0% via-[#c8d9ed] via-22% to-[#e3f4fd] pt-[2px] pl-[2px]">
        <Group title="Pages" w="w-[140px]">
          <Big icon="garde" a="Page de" b="garde" caret w="w-[48px]" />
          <Big icon="vierge" a="Page" b="vierge" w="w-[40px]" />
          <Big icon="saut" a="Saut de" b="page" w="w-[47px]" />
        </Group>
        <Group title="Tableaux" w="w-[53px]"><Big icon="tableau" a="Tableau" caret w="w-[49px]" /></Group>
        <Group title="Illustrations" w="w-[243px]">
          <Big icon="image" a="Image" w="w-[44px]" />
          <Big icon="clipart" a="Images" b="clipart" w="w-[42px]" />
          <Big icon="formes" a="Formes" caret on w="w-[42px]" />
          <Big icon="smartart" a="SmartArt" w="w-[48px]" />
          <Big icon="graphique" a="Graphique" w="w-[60px]" />
        </Group>
        <Group title="Liens" w="w-[151px]">
          <Big icon="lien" a="Lien" b="hypertexte" w="w-[60px]" />
          <Big icon="signet" a="Signet" w="w-[43px]" />
          <Big icon="renvoi" a="Renvoi" w="w-[42px]" />
        </Group>
        <Group title="En-tête et pied de page" w="w-[148px]">
          <Big icon="entete" a="En-tête" caret w="w-[44px]" />
          <Big icon="pied" a="Pied de" b="page" caret w="w-[42px]" />
          <Big icon="numero" a="Numéro" b="de page" caret w="w-[56px]" />
        </Group>
        <Group title="Texte" w="w-[334px]">
          <Big icon="zone" a="Zone de" b="texte" caret w="w-[50px]" />
          <Big icon="quick" a="QuickPart" caret w="w-[51px]" />
          <Big icon="wordart" a="WordArt" caret w="w-[51px]" />
          <Big icon="lettrine" a="Lettrine" caret dim w="w-[44px]" />
          <div className="pt-px pl-[3px]">
            <Small label="Ligne de signature" caret icon={<><path d="M2 1h8l4 4v10H2z" fill="#fff" stroke="#7b8aa6" /><path d="M4 11q2-4 4 0t5-1" stroke="#3c7a3e" fill="none" /><path d="M13 4l2 2-6 7-3 1 1-3z" fill="#f1bd3a" stroke="#6d5524" /></>} />
            <Small label="Date et heure" icon={<><path d="M.5 1.500h12v11H.500z" fill="#fff" stroke="#6b7fa6" /><path d="M.5 1.500h12v2H.500z" fill="#4676cf" /><text x="6" y="12" fontSize="9" fontWeight="700" textAnchor="middle" fill="#222" fontFamily="Liberation Sans">5</text><circle cx="12" cy="12" r="3.500" fill="#e8f0fa" stroke="#587bb5" /><path d="M12 10v2h2" stroke="#345" fill="none" /></>} />
            <Small label="Objet" caret icon={<><path d="M3.500 3.500h12v11h-12z" fill="#dde8f5" stroke="#5f7190" /><path d="M0 1l4 3-4 3z" fill="#2e5fc4" /><path d="M8 5h2v4h3l-4 5-4-5h3z" fill="#3fa13f" stroke="#1f6a24" /><circle cx="13" cy="6" r="1.500" fill="#f5a32f" /></>} />
          </div>
        </Group>
        <Group title="Symboles" w="w-[108px]">
          <Big icon="equation" a="Équation" caret w="w-[54px]" />
          <Big icon="symbole" a="Symbole" caret w="w-[50px]" />
        </Group>
      </div>
      <div className="h-[7px] shrink-0" />

      <main className="relative flex min-h-0 flex-1 bg-linear-to-b from-[#a3c0e8] via-[#527cb0] via-75% to-[#6591cf]">
        <svg viewBox="0 0 279 140" className="absolute top-0 left-0 h-[140px] w-[279px]" aria-hidden="true"><path d="M0 0h279v37Q130 80 0 138z" fill="#fff" opacity=".14" /><path d="M0 138Q130 80 279 37" stroke="#c6daf3" fill="none" opacity=".4" /></svg>
        <Document />
        <div className="flex-1" />
        <Scrollbar />
      </main>

      <StatusBar />
      <Taskbar />

      <button aria-label="Bouton Office" className="absolute top-[3px] left-1">
        <svg viewBox="0 0 38 38" className="size-[38px]"><circle cx="19" cy="19" r="18" fill="url(#orb)" stroke="#8590a3" /><g fill="none" strokeWidth="2.600"><path d="M17 9h-8v9h6" stroke="#e2561c" strokeWidth="3" /><path d="M17 9v6" stroke="#e2561c" /><rect x="20" y="13" width="6" height="5.500" stroke="#3f83d4" rx="1" /><rect x="11" y="22" width="5.500" height="6" stroke="#f0b41f" rx="1" /><rect x="20" y="22" width="7" height="7" stroke="#6fae38" rx="1" /></g></svg>
      </button>

      <ShapesMenu />
      <div role="tooltip" className="absolute top-[174px] left-[350px] rounded-[3px] border border-[#767676] bg-linear-to-b from-white to-[#e4e5f0] px-1 text-[11px] leading-[20px] text-[#575757] shadow-[3px_3px_3px_rgba(0,0,0,0.35)]">Flèche</div>

      <svg viewBox="0 0 1366 768" className="pointer-events-none absolute top-0 left-0 h-[768px] w-[1366px]" fill="none" stroke="#ed1c24" strokeWidth="3.300" strokeLinejoin="round" aria-hidden="true">
        <path d="M153.500 175L152.500 168L149.500 160V49M130.500 74L149 49L156 51L166 63" />
        <path d="M143 220L158 196L160 191L162 206L164 241M144 249H158L163 246L170 237H178" />
        <path d="M251.500 307C255 270 262 210 278 155C284 135 292 120 300 107M285.500 121L300 107L303 120L309 152" />
        <path d="M214 333H208V320Q210 315 222 316L226 330V342L212 356L197 370Q186 379 176 379L175 366Q183 358 196 361Q203 367 212 380Q222 386 230 387Q237 385 237 361" />
        <path d="M501 275L478 264C450 252 420 238 410 228C385 210 360 180 344 156M345.500 174V156H350L364 160" />
        <path d="M523 249H551L533 262L514 269C530 265 545 262 551 272C554 285 546 300 537 306Q527 307 519 308" />
      </svg>
    </div>
  );
}
